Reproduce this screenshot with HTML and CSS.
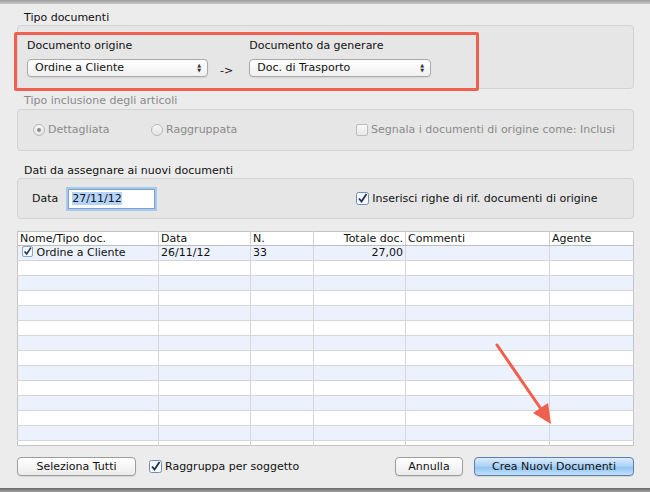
FILE: index.html
```html
<!DOCTYPE html>
<html lang="it">
<head>
    <meta charset="UTF-8">
    <title>Crea Nuovi Documenti</title>
    <link rel="stylesheet" href="styles.css">
</head>
<body>
    <div class="top-edge"></div>
    <div class="dialog">
        <div class="group-title">Tipo documenti</div>
        <div class="group-box box-docs">
            <div class="doc-col">
                <div class="field-label">Documento origine</div>
                <div class="popup popup-origin">Ordine a Cliente<span class="popup-arrows">&#9650;<br>&#9660;</span></div>
            </div>
            <div class="arrow-text">-&gt;</div>
            <div class="doc-col">
                <div class="field-label">Documento da generare</div>
                <div class="popup popup-target">Doc. di Trasporto<span class="popup-arrows">&#9650;<br>&#9660;</span></div>
            </div>
        </div>

        <div class="group-title disabled title-incl">Tipo inclusione degli articoli</div>
        <div class="group-box box-incl">
            <div class="option opt-detail disabled"><span class="radio on"></span>Dettagliata</div>
            <div class="option opt-group disabled"><span class="radio"></span>Raggruppata</div>
            <div class="option opt-flag disabled"><span class="check"></span>Segnala i documenti di origine come: Inclusi</div>
        </div>

        <div class="group-title title-data">Dati da assegnare ai nuovi documenti</div>
        <div class="group-box box-data">
            <span class="data-label">Data</span>
            <div class="date-input"><span class="selected">27/11/12</span></div>
            <div class="option opt-rows">
                <svg class="check-svg" width="13" height="13" viewBox="0 0 13 13"><rect x="0.5" y="0.5" width="12" height="12" rx="2" fill="#f4f8fd" stroke="#6f8fb8"/><path d="M3 6.5 L5.5 9.5 L10.5 2" fill="none" stroke="#1f2f4d" stroke-width="1.8"/></svg>
                Inserisci righe di rif. documenti di origine
            </div>
        </div>

        <table class="doc-table">
            <thead>
                <tr><th>Nome/Tipo doc.</th><th>Data</th><th>N.</th><th class="num">Totale doc.</th><th>Commenti</th><th>Agente</th></tr>
            </thead>
            <tbody>
                <tr><td><svg class="check-svg" width="11" height="11" viewBox="0 0 13 13"><rect x="0.5" y="0.5" width="12" height="12" rx="2" fill="#f4f8fd" stroke="#6f8fb8"/><path d="M3 6.5 L5.5 9.5 L10.5 2" fill="none" stroke="#1f2f4d" stroke-width="1.8"/></svg> Ordine a Cliente</td><td>26/11/12</td><td>33</td><td class="num">27,00</td><td></td><td></td></tr>
                <tr><td></td><td></td><td></td><td></td><td></td><td></td></tr>
                <tr><td></td><td></td><td></td><td></td><td></td><td></td></tr>
                <tr><td></td><td></td><td></td><td></td><td></td><td></td></tr>
                <tr><td></td><td></td><td></td><td></td><td></td><td></td></tr>
                <tr><td></td><td></td><td></td><td></td><td></td><td></td></tr>
                <tr><td></td><td></td><td></td><td></td><td></td><td></td></tr>
                <tr><td></td><td></td><td></td><td></td><td></td><td></td></tr>
                <tr><td></td><td></td><td></td><td></td><td></td><td></td></tr>
                <tr><td></td><td></td><td></td><td></td><td></td><td></td></tr>
                <tr><td></td><td></td><td></td><td></td><td></td><td></td></tr>
                <tr><td></td><td></td><td></td><td></td><td></td><td></td></tr>
                <tr><td></td><td></td><td></td><td></td><td></td><td></td></tr>
                <tr class="last"><td></td><td></td><td></td><td></td><td></td><td></td></tr>
            </tbody>
        </table>

        <div class="footer-bar">
            <button class="btn btn-select">Seleziona Tutti</button>
            <div class="option opt-grouping">
                <svg class="check-svg" width="13" height="13" viewBox="0 0 13 13"><rect x="0.5" y="0.5" width="12" height="12" rx="2" fill="#f4f8fd" stroke="#6f8fb8"/><path d="M3 6.5 L5.5 9.5 L10.5 2" fill="none" stroke="#1f2f4d" stroke-width="1.8"/></svg>
                Raggruppa per soggetto
            </div>
            <div class="spacer"></div>
            <button class="btn btn-cancel">Annulla</button>
            <button class="btn btn-default">Crea Nuovi Documenti</button>
        </div>
    </div>
    <div class="bottom-edge"></div>

    <!-- annotations drawn over the dialog -->
    <div class="highlight-box"></div>
    <svg class="annot-arrow" width="650" height="492" viewBox="0 0 650 492">
        <line x1="497" y1="345" x2="541" y2="409" stroke="#f0604f" stroke-width="3" stroke-linecap="round"/>
        <polygon points="551,424 548,403 533,413" fill="#f0604f"/>
    </svg>
</body>
</html>
```

FILE: styles.css
```css
body { margin: 0; width: 650px; height: 492px; overflow: hidden; background-color: #ececec; font-family: "DejaVu Sans", sans-serif; font-size: 11px; color: #111; position: relative; }
.top-edge { height: 4px; background: linear-gradient(#9c9c9c, #c9c9c9); }
.dialog { padding: 0 16px 0 17px; }
.group-title { margin: 8px 0 1px 7px; line-height: 12px; }
.group-title.disabled { color: #8a8a8a; }
.title-incl { margin-top: 6px; }
.title-data { margin-top: 14px; }
.group-box { border: 1px solid #d3d3d3; border-radius: 4px; background-color: #e6e6e6; box-sizing: border-box; width: 617px; display: flex; align-items: center; }
.box-docs { height: 64px; padding: 0 9px; align-items: flex-start; padding-top: 14px; }
.doc-col { display: flex; flex-direction: column; gap: 7px; }
.field-label { line-height: 12px; }
.popup { position: relative; height: 18px; box-sizing: border-box; border: 1px solid #a9a9a9; border-radius: 4px; background: linear-gradient(#ffffff, #f0f0f0); line-height: 16px; padding-left: 7px; box-shadow: 0 1px 1px rgba(0,0,0,0.08); }
.popup-origin { width: 181px; }
.popup-target { width: 182px; }
.popup-arrows { position: absolute; right: 6px; top: 3px; font-size: 5px; line-height: 5px; color: #333; }
.arrow-text { margin: 25px 16px 0 12px; line-height: 12px; }
.box-incl { height: 42px; padding-left: 15px; }
.group-title + .box-incl { margin-top: 2px; }
.option { display: flex; align-items: center; gap: 3px; line-height: 14px; }
.disabled { color: #8a8a8a; }
.opt-detail { width: 118px; }
.opt-group { width: 205px; }
.radio { width: 12px; height: 12px; box-sizing: border-box; border: 1px solid #b8b8b8; border-radius: 50%; background: linear-gradient(#f6f6f6, #e4e4e4); display: inline-flex; align-items: center; justify-content: center; }
.radio.on::after { content: ""; width: 4px; height: 4px; border-radius: 50%; background-color: #8c8c8c; }
.check { width: 12px; height: 12px; box-sizing: border-box; border: 1px solid #bdbdbd; border-radius: 2px; background: linear-gradient(#f8f8f8, #e8e8e8); }
.box-data { height: 41px; padding-left: 14px; }
.data-label { margin-right: 10px; }
.date-input { width: 87px; height: 20px; box-sizing: border-box; border: 1px solid #7da2ce; box-shadow: 0 0 0 2px #a9c8ee; background-color: #fff; padding: 2px 3px; line-height: 14px; }
.selected { background-color: #b5d4fd; }
.opt-rows { margin-left: 201px; }
.check-svg { flex: none; }
.doc-table { margin-top: 12px; width: 617px; border-collapse: collapse; table-layout: fixed; background-color: #fff; border: 1px solid #c4c4c4; font-size: 11px; }
.doc-table th { height: 13px; font-weight: normal; text-align: left; padding: 0 2px; line-height: 13px; border-left: 1px solid #d2d2d2; border-bottom: 1px solid #bcbcbc; }
.doc-table th:first-child { border-left: none; width: 136px; }
.doc-table th:nth-child(2) { width: 87px; }
.doc-table th:nth-child(3) { width: 58px; }
.doc-table th:nth-child(4) { width: 87px; }
.doc-table th:nth-child(5) { width: 139px; }
.doc-table td { height: 14px; padding: 0 2px; line-height: 14px; border-left: 1px solid #d6d6d6; border-bottom: 1px solid #d6d6d6; white-space: nowrap; overflow: hidden; }
.doc-table td:first-child { border-left: none; padding-left: 4px; }
.doc-table td svg { vertical-align: -1px; }
.doc-table tbody tr:nth-child(odd) { background-color: #ecf2fd; }
.doc-table tr.last td { height: 4px; border-bottom: none; }
.num { text-align: right !important; }
.footer-bar { display: flex; align-items: center; margin-top: 11px; }
.btn { height: 19px; box-sizing: border-box; border: 1px solid #9d9d9d; border-radius: 4px; background: linear-gradient(#ffffff, #ececec); font-family: "DejaVu Sans", sans-serif; font-size: 11px; color: #111; padding: 0; box-shadow: 0 1px 1px rgba(0,0,0,0.1); }
.btn-select { width: 119px; }
.opt-grouping { margin-left: 13px; }
.spacer { flex: 1; }
.btn-cancel { width: 68px; margin-right: 11px; }
.btn-default { width: 160px; border-color: #5b7fb3; background: linear-gradient(#dcecfb, #a9d0f5 50%, #8ec2f1 51%, #c2e1fb); }
.bottom-edge { position: absolute; left: 0; right: 0; top: 488px; height: 4px; background: linear-gradient(#6a6a6a, #a0a0a0); }
.highlight-box { position: absolute; left: 14px; top: 32px; width: 459px; height: 53px; border: 3px solid #f0604f; border-radius: 2px; pointer-events: none; }
.annot-arrow { position: absolute; left: 0; top: 0; pointer-events: none; }
```
